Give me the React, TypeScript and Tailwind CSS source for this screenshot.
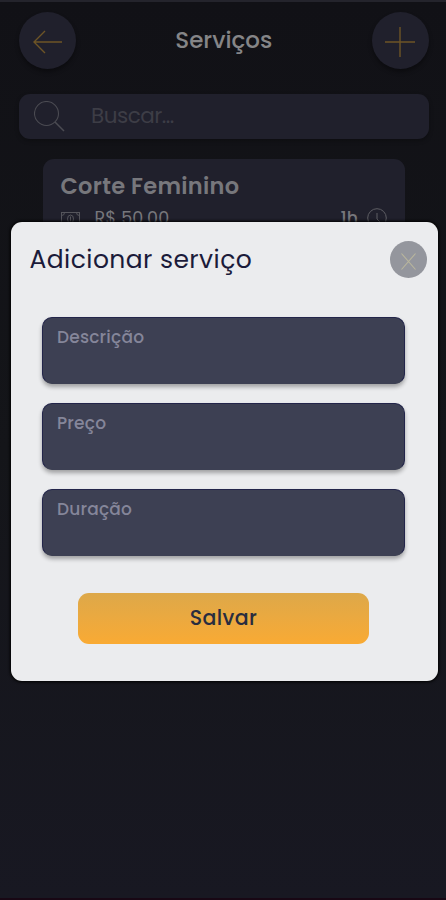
import type { FC, ReactNode } from 'react'

type RoundButtonProps = {
  label: string
  children: ReactNode
}

const RoundButton: FC<RoundButtonProps> = ({ label, children }) => (
  <button
    type="button"
    aria-label={label}
    className="flex size-[57px] items-center justify-center rounded-full bg-[#20202c] shadow-[0_3px_4px_rgba(0,0,0,0.35)]"
  >
    {children}
  </button>
)

const Header: FC = () => (
  <header className="flex items-center justify-between">
    <RoundButton label="Voltar">
      <svg width="30" height="24" viewBox="0 0 30 24" fill="none" stroke="#6d5426" className="mt-0.5">
        <path d="M29 12H1M12 1L1 12l11 11" strokeWidth="1.4" />
      </svg>
    </RoundButton>
    <h1 className="font-medium text-[#858587] text-[23px]">Serviços</h1>
    <RoundButton label="Adicionar">
      <svg width="30" height="30" viewBox="0 0 30 30" fill="none" stroke="#6d5426" className="mt-0.5">
        <path d="M15 0v30M0 15h30" strokeWidth="1.4" />
      </svg>
    </RoundButton>
  </header>
)

const SearchBar: FC = () => (
  <div className="mt-[25px] flex h-[45px] items-center rounded-[11px] bg-[#20202c] pl-[15px] shadow-[0_2px_4px_rgba(0,0,0,0.25)]">
    <svg width="31" height="31" viewBox="0 0 31 31" fill="none" stroke="#4b4b52">
      <circle cx="12.5" cy="12.5" r="12" strokeWidth="1.1" />
      <path d="M21 21l9 9" strokeWidth="1.5" />
    </svg>
    <span className="ml-[26px] text-[#3d3d46] text-[21.5px] tracking-[-0.5px]">Buscar...</span>
  </div>
)

const ServiceCard: FC = () => (
  <div className="mx-[23.5px] mt-5 h-[90px] rounded-[11px] bg-[#20202c] px-[18px] pt-[11.5px] text-[#77777c]">
    <h2 className="font-semibold text-[22.5px] leading-[30px] tracking-[0.3px]">Corte Feminino</h2>
    <div className="mt-[5.5px] flex items-center text-[17.5px] leading-6">
      <svg width="19" height="14" viewBox="0 0 19 14" fill="none" stroke="#55555c" className="mt-0.5">
        <rect x="0.5" y="0.5" width="18" height="13" />
        <ellipse cx="9.5" cy="7" rx="3" ry="4" />
        <path d="M.5 3.5a3 3 0 0 0 3-3M15.5.5a3 3 0 0 0 3 3M.5 10.5a3 3 0 0 1 3 3M15.5 13.5a3 3 0 0 1 3-3M9.5 4.5v5" />
      </svg>
      <span className="ml-[15px] tracking-[0.15px]">R$ 50,00</span>
      <span className="ml-auto font-medium">1h</span>
      <svg width="20" height="20" viewBox="0 0 20 20" fill="none" stroke="#5e5e64" className="ml-[9px]">
        <circle cx="10" cy="10" r="9.3" />
        <path d="M10 5v6l3 3" />
      </svg>
    </div>
  </div>
)

const fields = ['Descrição', 'Preço', 'Duração']

const AddServiceModal: FC = () => (
  <div className="absolute top-[220px] right-[8.5px] left-[10.5px] h-[459px] rounded-[11px] bg-[#ebecee] shadow-[0_0_3px_1px_#000]">
    <div className="flex items-center justify-between pt-[19px] pr-[10.5px] pl-[19px]">
      <h2 className="text-[#1b1b3a] text-[25px] leading-9 tracking-[0.43px]">Adicionar serviço</h2>
      <button
        type="button"
        aria-label="Fechar"
        className="flex size-[37px] items-center justify-center rounded-full bg-[#94969d]"
      >
        <svg width="15" height="17" viewBox="0 0 15 17" fill="none" stroke="#b9b69d" className="mt-[3px]">
          <path d="M.5.5l14 16M14.5.5l-14 16" strokeWidth="1.1" />
        </svg>
      </button>
    </div>
    <form className="mt-[38.5px] flex flex-col gap-[19px] pr-[32.5px] pl-[31.5px]">
      {fields.map((field) => (
        <label
          key={field}
          className="h-[67px] rounded-[10px] border border-[#23254a] border-b-[#3d4053] bg-[#3d4053] pt-[7px] pl-[14px] font-medium text-[#85869a] text-[17px] leading-6 tracking-[0.2px] shadow-[0_3px_4px_rgba(0,0,0,0.32)]"
        >
          {field}
        </label>
      ))}
    </form>
    <button
      type="button"
      className="mt-[37.5px] ml-[67.5px] block h-[51px] w-[291px] rounded-[11px] bg-linear-to-b from-[#dda849] to-[#f9aa33] pb-px font-medium text-[#292d3f] text-[20.5px] tracking-[0.4px]"
    >
      Salvar
    </button>
  </div>
)

const App: FC = () => (
  <div className="relative h-[900px] w-[446px] overflow-hidden border-[#24242c] border-t-2 border-b-2 border-b-[#180714] bg-linear-to-b from-[#111116] via-[#141519] to-[#181822] font-['Poppins','Inter',sans-serif]">
    <div className="pt-[10px] pr-[17.5px] pl-[19px]">
      <Header />
      <SearchBar />
      <ServiceCard />
    </div>
    <AddServiceModal />
  </div>
)

export default App
